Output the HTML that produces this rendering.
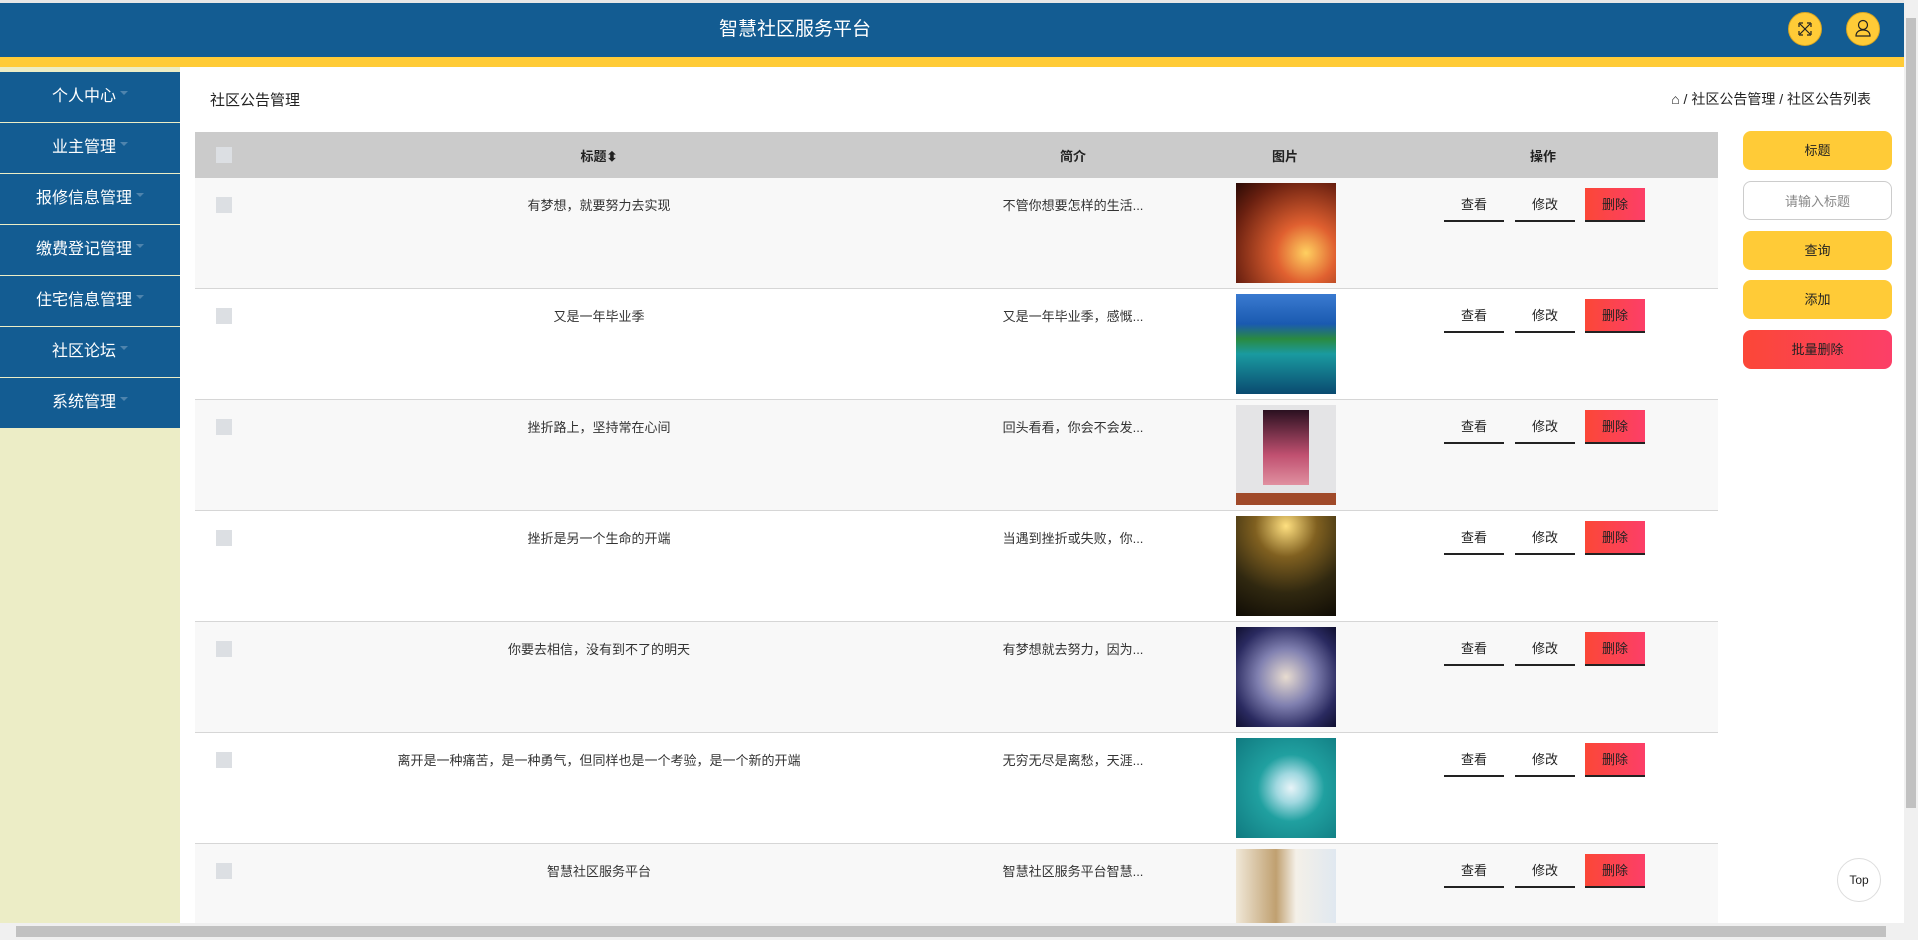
<!DOCTYPE html>
<html><head><meta charset="utf-8"><style>
*{box-sizing:border-box;margin:0;padding:0}
html,body{overflow:hidden}
body{width:1918px;height:940px;position:relative;background:#fff;font-family:"Liberation Sans","Noto Sans CJK SC",sans-serif;color:#333}
.top{position:absolute;left:0;top:0;width:1904px;height:3px;background:#e6e6e6}
.hdr{position:absolute;left:0;top:3px;width:1904px;height:54px;background:#135c92;color:#fff;font-size:19px;text-align:center;line-height:54px;padding-right:314px}
.yel{position:absolute;left:0;top:57px;width:1904px;height:10px;background:#ffcb37}
.ic{position:absolute;top:12px;width:34px;height:34px;border-radius:50%;background:#ffcb37;border:1px solid #d9a520}
.side{position:absolute;left:0;top:67px;width:180px;height:856px;background:#ecedc6}
.mi{position:absolute;left:0;width:180px;height:50px;background:#135c92;color:#fff;font-size:16px;text-align:center;line-height:50px}
.mi:after{content:"";display:inline-block;border:4px solid transparent;border-top:4px solid #4f84ad;margin-left:4px;vertical-align:2px}
.ttl{position:absolute;left:210px;top:89px;font-size:15px;color:#222}
.bc{position:absolute;right:47px;top:89px;font-size:14px;color:#222}
.th{position:absolute;left:195px;top:132px;width:1523px;height:46px;background:#cbcbcb;font-size:13px;font-weight:bold;color:#222}
.row{position:absolute;left:195px;width:1523px;height:111px;border-bottom:1px solid #d6d6d6;font-size:13px;color:#333;overflow:hidden}
.cb{position:absolute;left:21px;width:16px;height:16px;background:#dcdfe3}
.c{position:absolute;transform:translateX(-50%);white-space:nowrap}
.img{position:absolute;left:1041px;top:5px;width:100px;height:100px}
.b{position:absolute;top:10px;width:60px;height:34px;line-height:34px;text-align:center;font-size:13px;color:#222;border-bottom:2px solid #222}
.del{background:linear-gradient(90deg,#fb4737,#fc3f68);color:#222}
.rb{position:absolute;left:1743px;width:149px;height:39px;border-radius:8px;background:#ffcb37;text-align:center;line-height:39px;font-size:13px;color:#222}
.vs{position:absolute;right:0;top:0;width:14px;height:923px;background:#f0f0f0}
.hs{position:absolute;left:0;top:923px;width:1918px;height:17px;background:#f0f0f0}
</style></head><body>
<div class="top"></div>
<div class="hdr">智慧社区服务平台</div>
<div class="yel"></div>
<div class="ic" style="left:1788px"><svg width="32" height="32" viewBox="0 0 32 32" fill="none" stroke="#222" stroke-width="1.2"><path d="M11 11l10 10M21 11L11 21M10 10h4M10 10v4M22 10h-4M22 10v4M10 22h4M10 22v-4M22 22h-4M22 22v-4"/></svg></div>
<div class="ic" style="left:1846px"><svg width="32" height="32" viewBox="0 0 32 32" fill="none" stroke="#222" stroke-width="1.2"><circle cx="16" cy="12" r="4.5"/><path d="M9 23c0-4 3-6 7-6s7 2 7 6z"/></svg></div>
<div class="side">
<div class="mi" style="top:5px">个人中心</div>
<div class="mi" style="top:56px">业主管理</div>
<div class="mi" style="top:107px">报修信息管理</div>
<div class="mi" style="top:158px">缴费登记管理</div>
<div class="mi" style="top:209px">住宅信息管理</div>
<div class="mi" style="top:260px">社区论坛</div>
<div class="mi" style="top:311px">系统管理</div>
</div>
<div class="ttl">社区公告管理</div>
<div class="bc">⌂ / 社区公告管理 / 社区公告列表</div>
<div class="th"><div class="cb" style="top:15px"></div>
<div class="c" style="left:404px;top:14px">标题⬍</div><div class="c" style="left:878px;top:14px">简介</div><div class="c" style="left:1090px;top:14px">图片</div><div class="c" style="left:1348px;top:14px">操作</div></div>

<div class="row" style="top:178px;background:#f8f8f8"><div class="cb" style="top:19px"></div><div class="c" style="left:404px;top:17px">有梦想，就要努力去实现</div><div class="c" style="left:878px;top:17px">不管你想要怎样的生活...</div><div class="img" style="background:radial-gradient(circle at 70% 70%,#ffd060,#e06030 30%,#6a2010 75%,#2a0a05)"></div><div class="b" style="left:1249px">查看</div><div class="b" style="left:1320px">修改</div><div class="b del" style="left:1390px">删除</div></div>
<div class="row" style="top:289px;background:#fff"><div class="cb" style="top:19px"></div><div class="c" style="left:404px;top:17px">又是一年毕业季</div><div class="c" style="left:878px;top:17px">又是一年毕业季，感慨...</div><div class="img" style="background:linear-gradient(#3a7ad0,#1a5ab0 30%,#2a8a40 45%,#1a9aa0 60%,#0a4a70)"></div><div class="b" style="left:1249px">查看</div><div class="b" style="left:1320px">修改</div><div class="b del" style="left:1390px">删除</div></div>
<div class="row" style="top:400px;background:#f8f8f8"><div class="cb" style="top:19px"></div><div class="c" style="left:404px;top:17px">挫折路上，坚持常在心间</div><div class="c" style="left:878px;top:17px">回头看看，你会不会发...</div><div class="img" style="background:linear-gradient(#e4e4e6 0,#e4e4e6 88%,#a04a2a 88%)"><div style="position:absolute;left:27px;top:5px;width:46px;height:75px;background:linear-gradient(#2a1020,#c05070 60%,#e090a0)"></div></div><div class="b" style="left:1249px">查看</div><div class="b" style="left:1320px">修改</div><div class="b del" style="left:1390px">删除</div></div>
<div class="row" style="top:511px;background:#fff"><div class="cb" style="top:19px"></div><div class="c" style="left:404px;top:17px">挫折是另一个生命的开端</div><div class="c" style="left:878px;top:17px">当遇到挫折或失败，你...</div><div class="img" style="background:radial-gradient(circle at 50% 10%,#ffe080,#806020 30%,#302810 65%,#100c05)"></div><div class="b" style="left:1249px">查看</div><div class="b" style="left:1320px">修改</div><div class="b del" style="left:1390px">删除</div></div>
<div class="row" style="top:622px;background:#f8f8f8"><div class="cb" style="top:19px"></div><div class="c" style="left:404px;top:17px">你要去相信，没有到不了的明天</div><div class="c" style="left:878px;top:17px">有梦想就去努力，因为...</div><div class="img" style="background:radial-gradient(circle at 50% 50%,#e8dcd0,#8080b0 40%,#2a2a60 75%,#101030)"></div><div class="b" style="left:1249px">查看</div><div class="b" style="left:1320px">修改</div><div class="b del" style="left:1390px">删除</div></div>
<div class="row" style="top:733px;background:#fff"><div class="cb" style="top:19px"></div><div class="c" style="left:404px;top:17px">离开是一种痛苦，是一种勇气，但同样也是一个考验，是一个新的开端</div><div class="c" style="left:878px;top:17px">无穷无尽是离愁，天涯...</div><div class="img" style="background:radial-gradient(circle at 55% 50%,#e8f4f8,#a0d8e0 20%,#20a0a0 45%,#107a80)"></div><div class="b" style="left:1249px">查看</div><div class="b" style="left:1320px">修改</div><div class="b del" style="left:1390px">删除</div></div>
<div class="row" style="top:844px;height:79px;background:#f8f8f8;border:0"><div class="cb" style="top:19px"></div><div class="c" style="left:404px;top:17px">智慧社区服务平台</div><div class="c" style="left:878px;top:17px">智慧社区服务平台智慧...</div><div class="img" style="background:linear-gradient(90deg,#f0e8d8,#c0a070 40%,#f4f0e8 60%,#e0e8f0)"></div><div class="b" style="left:1249px">查看</div><div class="b" style="left:1320px">修改</div><div class="b del" style="left:1390px">删除</div></div>

<div class="rb" style="top:131px">标题</div>
<div class="rb" style="top:181px;background:#fff;border:1px solid #ccc;color:#888">请输入标题</div>
<div class="rb" style="top:231px">查询</div>
<div class="rb" style="top:280px">添加</div>
<div class="rb" style="top:330px;background:linear-gradient(90deg,#fb4737,#fc3f68)">批量删除</div>
<div style="position:absolute;left:1837px;top:858px;width:44px;height:44px;border-radius:50%;background:#fff;border:1px solid #ddd;text-align:center;line-height:42px;font-size:12px;color:#222">Top</div>
<div class="vs"><div style="position:absolute;left:2px;top:18px;width:10px;height:790px;background:#c1c1c1"></div></div>
<div class="hs"><div style="position:absolute;left:16px;top:3px;width:1870px;height:11px;background:#c1c1c1"></div></div>
</body></html>
